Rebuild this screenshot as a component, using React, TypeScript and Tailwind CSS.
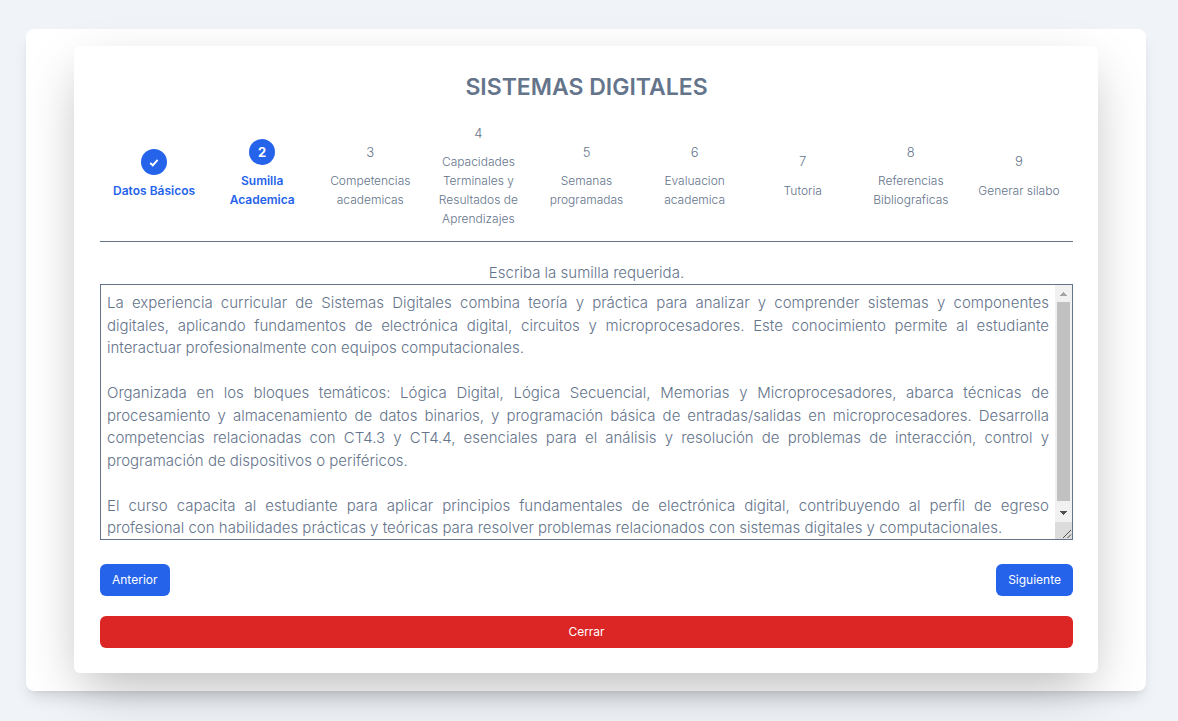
import { useState } from "react";

const steps = [
  "Datos Básicos",
  "Sumilla Academica",
  "Competencias academicas",
  "Capacidades Terminales y Resultados de Aprendizajes",
  "Semanas programadas",
  "Evaluacion academica",
  "Tutoria",
  "Referencias Bibliograficas",
  "Generar silabo",
];

const initialText = `La experiencia curricular de Sistemas Digitales combina teoría y práctica para analizar y comprender sistemas y componentes digitales, aplicando fundamentos de electrónica digital, circuitos y microprocesadores. Este conocimiento permite al estudiante interactuar profesionalmente con equipos computacionales.

Organizada en los bloques temáticos: Lógica Digital, Lógica Secuencial, Memorias y Microprocesadores, abarca técnicas de procesamiento y almacenamiento de datos binarios, y programación básica de entradas/salidas en microprocesadores. Desarrolla competencias relacionadas con CT4.3 y CT4.4, esenciales para el análisis y resolución de problemas de interacción, control y programación de dispositivos o periféricos.

El curso capacita al estudiante para aplicar principios fundamentales de electrónica digital, contribuyendo al perfil de egreso profesional con habilidades prácticas y teóricas para resolver problemas relacionados con sistemas digitales y computacionales.`;

function Step({ index, label, current }: { index: number; label: string; current: number }) {
  const reached = index <= current;
  return (
    <li
      aria-current={index === current ? "step" : undefined}
      className={`flex flex-col items-center gap-1.5 px-3 text-center text-xs leading-[19px] ${
        reached ? "font-semibold text-[#2563eb]" : "font-light text-[#64748b]"
      }`}
    >
      <span
        className={`flex size-[26px] items-center justify-center rounded-full text-[13px] ${
          reached ? "bg-[#2563eb] font-bold text-white" : ""
        }`}
      >
        {index < current ? (
          <svg viewBox="0 0 12 12" className="size-3" fill="none" stroke="currentColor" strokeWidth="2" aria-label="Completado">
            <path d="M2.2 6.9 4.8 9.3 9.6 3.9" />
          </svg>
        ) : (
          index
        )}
      </span>
      <span>{label}</span>
    </li>
  );
}

function ScrollTrack() {
  return (
    <div aria-hidden="true" className="flex w-[17px] flex-col bg-[#f1f1f1]">
      <svg viewBox="0 0 17 17" className="size-[17px]" shapeRendering="crispEdges">
        <path d="M5 11h7v-1h-1v-1h-1v-1h-1v-1h-1v1h-1v1h-1v1h-1z" fill="#a3a3a3" />
      </svg>
      <div className="mx-0.5 mb-1 flex-1 bg-[#c1c1c1]" />
      <svg viewBox="0 0 17 17" className="size-[17px]" shapeRendering="crispEdges">
        <path d="M5 6h7v1h-1v1h-1v1h-1v1h-1v-1h-1v-1h-1v-1h-1z" fill="#505050" />
      </svg>
      <svg viewBox="0 0 17 17" className="size-[17px] bg-[#dcdcdc]" stroke="#505050">
        <path d="M8 16 16 8M12.5 16 16 12.5" />
      </svg>
    </div>
  );
}

export default function App() {
  const [text, setText] = useState(initialText);
  return (
    <div className="min-h-screen bg-[#f0f3f8] pt-[29px] pr-8 pb-[30px] pl-[26px] font-[Inter,sans-serif] text-[#64748b]">
      <main className="rounded-lg bg-white px-12 pt-[17px] pb-[18px] shadow-lg">
        <section className="rounded-md bg-white pt-[25px] pr-[25px] pb-[25px] pl-[26px] shadow-[0_20px_50px_-8px_rgba(0,0,0,0.28)]">
          <h1 className="text-center text-[23px] leading-8 font-semibold">SISTEMAS DIGITALES</h1>
          <ol className="mt-[17px] grid grid-cols-9 items-center border-b border-[#64748b] pb-[13px]">
            {steps.map((label, i) => (
              <Step key={label} index={i + 1} label={label} current={2} />
            ))}
          </ol>
          <label htmlFor="sumilla" className="mt-5 block text-center text-[15px] leading-[22px] font-light">
            Escriba la sumilla requerida.
          </label>
          <div className="flex h-64 border border-[#64748b]">
            <textarea
              id="sumilla"
              value={text}
              onChange={(e) => setText(e.target.value)}
              className="min-w-0 flex-1 resize-none bg-white px-1.5 py-[7px] text-justify text-[15px] leading-normal font-light outline-none [scrollbar-width:none]"
            />
            <ScrollTrack />
          </div>
          <div className="mt-6 flex justify-between">
            <button type="button" className="h-8 rounded-md bg-[#2563eb] px-3 text-xs text-white">
              Anterior
            </button>
            <button type="button" className="h-8 rounded-md bg-[#2563eb] px-3 text-xs text-white">
              Siguiente
            </button>
          </div>
          <button type="button" className="mt-5 h-8 w-full rounded-md bg-[#dc2626] text-xs text-white">
            Cerrar
          </button>
        </section>
      </main>
    </div>
  );
}
